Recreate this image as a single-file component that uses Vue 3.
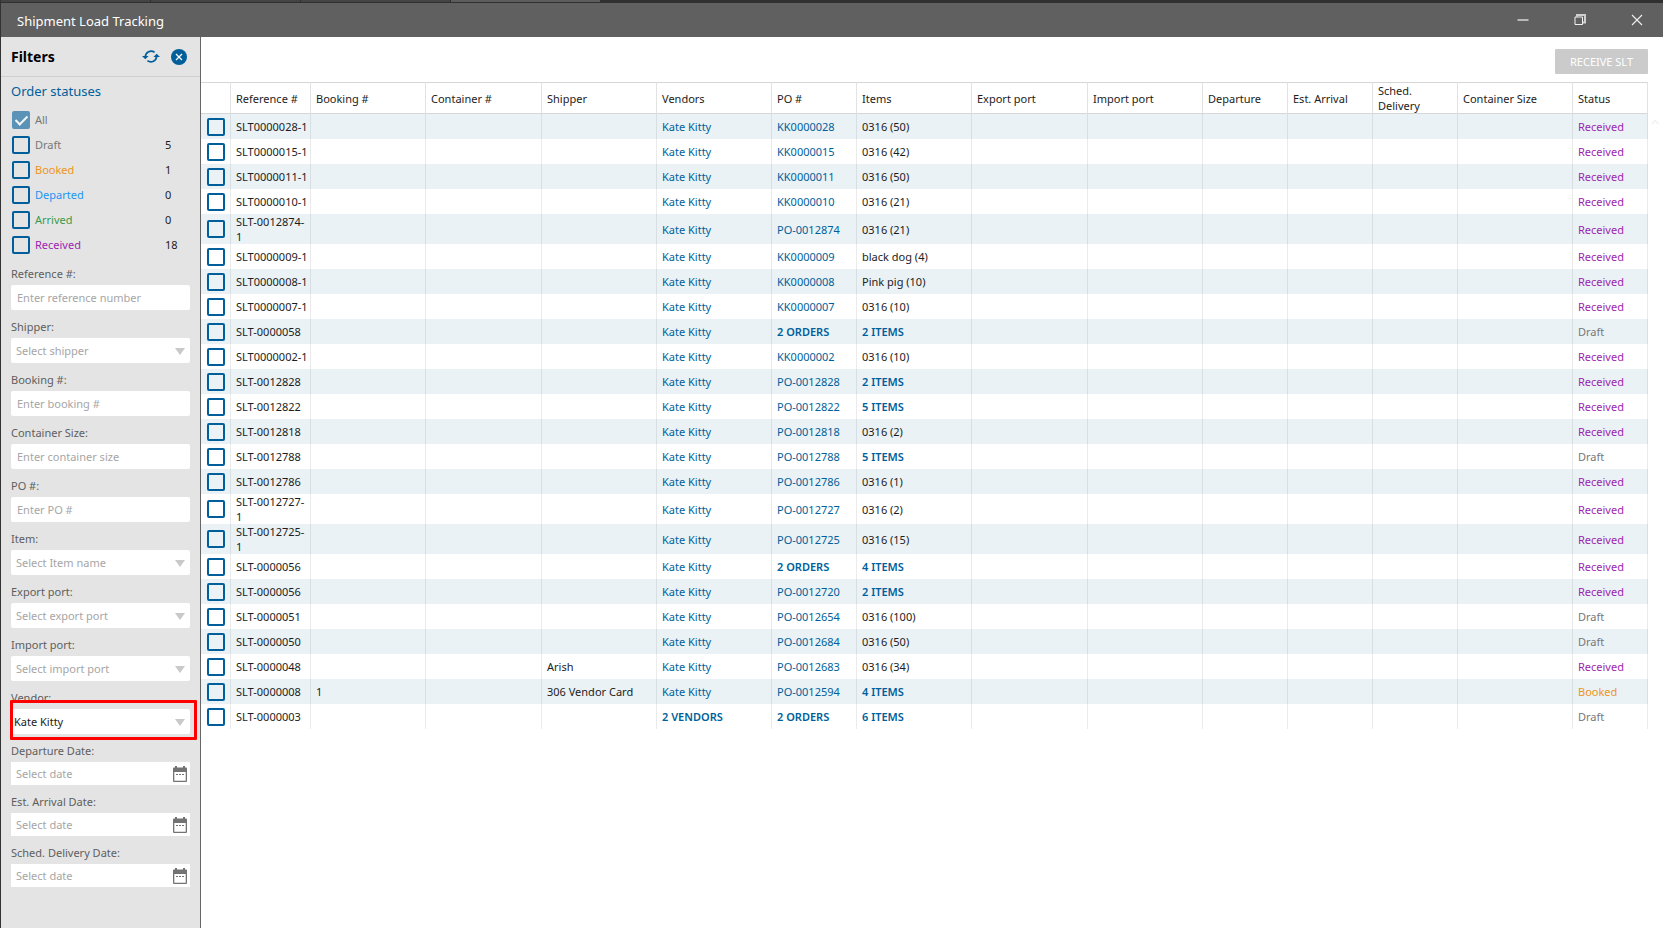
<script setup>
import { reactive, ref } from 'vue'

const statuses = reactive([
  { name: 'All', tone: 'all', count: '', checked: true, disabled: true },
  { name: 'Draft', tone: 'draft', count: 5, checked: false },
  { name: 'Booked', tone: 'booked', count: 1, checked: false },
  { name: 'Departed', tone: 'departed', count: 0, checked: false },
  { name: 'Arrived', tone: 'arrived', count: 0, checked: false },
  { name: 'Received', tone: 'received', count: 18, checked: false },
])

const fields = [
  { id: 'reference', label: 'Reference #:', type: 'text', hint: 'Enter reference number' },
  { id: 'shipper', label: 'Shipper:', type: 'select', hint: 'Select shipper' },
  { id: 'booking', label: 'Booking #:', type: 'text', hint: 'Enter booking #' },
  { id: 'size', label: 'Container Size:', type: 'text', hint: 'Enter container size' },
  { id: 'po', label: 'PO #:', type: 'text', hint: 'Enter PO #' },
  { id: 'item', label: 'Item:', type: 'select', hint: 'Select Item name' },
  { id: 'export', label: 'Export port:', type: 'select', hint: 'Select export port' },
  { id: 'import', label: 'Import port:', type: 'select', hint: 'Select import port' },
  { id: 'vendor', label: 'Vendor:', type: 'select', value: 'Kate Kitty', marked: true },
  { id: 'departure', label: 'Departure Date:', type: 'date', hint: 'Select date' },
  { id: 'arrival', label: 'Est. Arrival Date:', type: 'date', hint: 'Select date' },
  { id: 'delivery', label: 'Sched. Delivery Date:', type: 'date', hint: 'Select date' },
]

const columns = [
  ['Reference #', 'w80'], ['Booking #', 'w115'], ['Container #', 'w116'], ['Shipper', 'w115'],
  ['Vendors', 'w115'], ['PO #', 'w85'], ['Items', 'w115'], ['Export port', 'w116'],
  ['Import port', 'w115'], ['Departure', 'w85'], ['Est. Arrival', 'w85'], ['Sched. Delivery', 'w85'],
  ['Container Size', 'w115'], ['Status', 'w75'],
]

const rows = ref([
  ['SLT0000028-1', 'KK0000028', '0316 (50)', 'Received'],
  ['SLT0000015-1', 'KK0000015', '0316 (42)', 'Received'],
  ['SLT0000011-1', 'KK0000011', '0316 (50)', 'Received'],
  ['SLT0000010-1', 'KK0000010', '0316 (21)', 'Received'],
  ['SLT-0012874-\n1', 'PO-0012874', '0316 (21)', 'Received'],
  ['SLT0000009-1', 'KK0000009', 'black dog (4)', 'Received'],
  ['SLT0000008-1', 'KK0000008', 'Pink pig (10)', 'Received'],
  ['SLT0000007-1', 'KK0000007', '0316 (10)', 'Received'],
  ['SLT-0000058', '2 ORDERS', '2 ITEMS', 'Draft'],
  ['SLT0000002-1', 'KK0000002', '0316 (10)', 'Received'],
  ['SLT-0012828', 'PO-0012828', '2 ITEMS', 'Received'],
  ['SLT-0012822', 'PO-0012822', '5 ITEMS', 'Received'],
  ['SLT-0012818', 'PO-0012818', '0316 (2)', 'Received'],
  ['SLT-0012788', 'PO-0012788', '5 ITEMS', 'Draft'],
  ['SLT-0012786', 'PO-0012786', '0316 (1)', 'Received'],
  ['SLT-0012727-\n1', 'PO-0012727', '0316 (2)', 'Received'],
  ['SLT-0012725-\n1', 'PO-0012725', '0316 (15)', 'Received'],
  ['SLT-0000056', '2 ORDERS', '4 ITEMS', 'Received'],
  ['SLT-0000056', 'PO-0012720', '2 ITEMS', 'Received'],
  ['SLT-0000051', 'PO-0012654', '0316 (100)', 'Draft'],
  ['SLT-0000050', 'PO-0012684', '0316 (50)', 'Draft'],
  ['SLT-0000048', 'PO-0012683', '0316 (34)', 'Received', '', 'Arish'],
  ['SLT-0000008', 'PO-0012594', '4 ITEMS', 'Booked', '1', '306 Vendor Card'],
  ['SLT-0000003', '2 ORDERS', '6 ITEMS', 'Draft', '', '', '2 VENDORS'],
].map(([reference, po, items, status, booking = '', shipper = '', vendor = 'Kate Kitty']) => (
  { reference, po, items, status, booking, shipper, vendor, checked: false }
)))

const isGroup = (text) => /^\d+ [A-Z]+$/.test(text)
</script>

<template>
  <div class="window">
    <div class="strip"><i class="tab"></i><i class="tab"></i><i class="tab"></i><i class="tab active"></i></div>
    <header class="titlebar">
      <h1>Shipment Load Tracking</h1>
      <div class="controls">
        <button type="button" aria-label="Minimize">
          <svg width="12" height="12" viewBox="0 0 12 12"><path d="M0.5 6H11.5" stroke="#b9b9b9" stroke-width="2" /></svg>
        </button>
        <button type="button" aria-label="Restore">
          <svg width="12" height="12" viewBox="0 0 12 12" fill="none">
            <path d="M3 2.5V1H11V8.5H9" stroke="#cfcfcf" stroke-width="2" />
            <path d="M1 3H8.5V10.5H1Z" stroke="#f2f2f2" />
          </svg>
        </button>
        <button type="button" aria-label="Close">
          <svg width="12" height="12" viewBox="0 0 12 12"><path d="M1 1L11 11M11 1L1 11" stroke="#f0f0f0" stroke-width="1.1" /></svg>
        </button>
      </div>
    </header>
    <div class="body">
      <aside class="sidebar">
        <div class="sidehead">
          <h2>Filters</h2>
          <button type="button" aria-label="Refresh filters">
            <svg width="18" height="16" viewBox="0 0 18 16" fill="none">
              <path d="M3.4 8A5.7 5.7 0 0 1 12.6 3.4M14.6 7A5.7 5.7 0 0 1 5.4 11.6" stroke="#005f9a" stroke-width="1.7" />
              <path d="M0 7H6.6L3.3 10.2ZM11.4 8H18L14.7 4.8Z" fill="#005f9a" />
            </svg>
          </button>
          <button type="button" aria-label="Clear filters">
            <svg width="16" height="16" viewBox="0 0 16 16">
              <circle cx="8" cy="8" r="8" fill="#005f9a" />
              <path d="M5 5L11 11M11 5L5 11" stroke="#fff" stroke-width="1.3" />
            </svg>
          </button>
        </div>
        <h3>Order statuses</h3>
        <ul class="statuses">
          <li v-for="s in statuses" :key="s.name">
            <label :class="s.tone">
              <input v-model="s.checked" type="checkbox" class="check" :disabled="s.disabled" />{{ s.name }}
            </label>
            <span class="count">{{ s.count }}</span>
          </li>
        </ul>
        <div v-for="f in fields" :key="f.id" class="field">
          <label :for="f.id">{{ f.label }}</label>
          <div class="control" :class="{ marked: f.marked }">
            <template v-if="f.type === 'select'">
              <select :id="f.id" :class="{ chosen: f.value }"><option>{{ f.value || f.hint }}</option></select>
              <svg class="arrow" width="10" height="7" viewBox="0 0 10 7"><path d="M0 0H10L5 7Z" fill="#c9c9c9" /></svg>
            </template>
            <input v-else :id="f.id" type="text" :class="f.type" :placeholder="f.hint" />
            <button v-if="f.type === 'date'" type="button" class="calendar" :aria-label="'Pick ' + f.label">
              <svg width="14" height="16" viewBox="0 0 14 16">
                <path fill="#737373" fill-rule="evenodd" d="M2 0H4V1.5H10V0H12V1.5H13Q14 1.5 14 2.5V15Q14 16 13 16H1Q0 16 0 15V2.5Q0 1.5 1 1.5H2ZM1.3 6V14.7H12.7V6Z" />
                <path d="M3 8.5H5M6 8.5H8M9 8.5H11" stroke="#737373" stroke-width="1.2" />
              </svg>
            </button>
          </div>
        </div>
      </aside>
      <main class="content">
        <div class="toolbar"><button type="button" class="receive" disabled>RECEIVE SLT</button></div>
        <div class="tablewrap">
          <table>
            <colgroup><col class="w30" /><col v-for="c in columns" :key="c[0]" :class="c[1]" /></colgroup>
            <thead>
              <tr><th></th><th v-for="c in columns" :key="c[0]" scope="col">{{ c[0] }}</th></tr>
            </thead>
            <tbody>
              <tr v-for="(r, i) in rows" :key="i">
                <td class="pick"><input v-model="r.checked" type="checkbox" class="check" :aria-label="'Select ' + r.reference" /></td>
                <td class="ref">{{ r.reference }}</td>
                <td>{{ r.booking }}</td>
                <td></td>
                <td>{{ r.shipper }}</td>
                <td><a href="#" :class="{ group: isGroup(r.vendor) }">{{ r.vendor }}</a></td>
                <td><a href="#" :class="{ group: isGroup(r.po) }">{{ r.po }}</a></td>
                <td><a v-if="isGroup(r.items)" href="#" class="group">{{ r.items }}</a><template v-else>{{ r.items }}</template></td>
                <td></td><td></td><td></td><td></td><td></td><td></td>
                <td :class="r.status.toLowerCase()">{{ r.status }}</td>
              </tr>
            </tbody>
          </table>
          <svg class="scrollup" width="8" height="6" viewBox="0 0 8 6" fill="none"><path d="M0.5 5L4 1.5L7.5 5" stroke="#f1f1f1" stroke-width="1.5" /></svg>
        </div>
      </main>
    </div>
  </div>
</template>

<style>
body { background: #fff; }
</style>

<style scoped>
* { box-sizing: border-box; }
.window {
  display: flex; flex-direction: column; min-height: 100vh;
  border-left: 1px solid #333; background: #fff; color: #1c1c1c;
  font: 11px/15px "Noto Sans", "Open Sans", sans-serif;
}
h1, h2, h3, ul { margin: 0; padding: 0; font-weight: 400; list-style: none; }
button { border: 0; padding: 0; background: none; font: inherit; display: flex; align-items: center; justify-content: center; }
.strip { display: flex; gap: 1px; height: 3px; background: #303030; }
.tab { width: 149px; height: 2px; background: #444; }
.tab.active { background: #5c5c5c; }
.titlebar { display: flex; justify-content: space-between; align-items: center; height: 34px; padding-left: 16px; background: #606060; color: #fff; }
h1 { padding-top: 2px; font-size: 13px; line-height: 20px; }
.controls { display: flex; align-self: stretch; margin-right: -2px; overflow: hidden; }
.controls button { width: 57px; }
.window { overflow-x: clip; }
.body { display: flex; flex: 1; }
.sidebar { flex: none; width: 200px; padding: 0 10px; background: #e4e4e4; border-right: 1px solid #666; }
.sidehead { display: flex; align-items: center; gap: 11px; height: 40px; margin: 0 -10px; padding: 0 13px 0 10px; border-bottom: 1px solid #cfcfcf; }
h2 { flex: 1; font-size: 14px; line-height: 20px; font-weight: 700; color: #000; }
h3 { padding-bottom: 2px; font-size: 13px; line-height: 28px; color: #005f9a; }
.statuses li { display: flex; align-items: center; height: 25px; }
.statuses label { display: flex; align-items: center; gap: 5px; width: 154px; padding-left: 1px; }
.check { appearance: none; display: block; flex: none; width: 18px; height: 18px; margin: 0; border: 2px solid #005f9a; border-radius: 2px; }
.check:checked { background: #005f9a; }
.check:checked::after { content: ""; display: block; width: 5px; height: 10px; margin: 0 auto; border: solid #fff; border-width: 0 2px 2px 0; transform: rotate(45deg); }
.check:disabled { opacity: .6; }
.all, .draft { color: #777; }
.booked { color: #ee9420; }
.departed { color: #2196f3; }
.arrived { color: #3c9a4b; }
.received { color: #9c1fb0; }
.field label { display: block; padding: 9px 0 3px; font-size: 11px; line-height: 16px; color: #5e5e5e; }
.control { position: relative; }
.field input, select { appearance: none; display: block; width: 100%; height: 25px; margin: 0; padding: 0 6px; border: 0; border-radius: 2px; outline: 0; background: #fff; color: #a6a6a6; font: inherit; }
.field input.date { height: 23px; padding: 0 5px; border-radius: 0; }
.field input::placeholder { color: #a6a6a6; }
select { padding: 0 5px; }
select.chosen { padding: 0 3px; color: #1c1c1c; }
.arrow { position: absolute; right: 5px; top: 10px; }
.calendar { position: absolute; right: 3px; top: 4px; }
.marked::after { content: ""; position: absolute; inset: -9px -7px -6px -1px; border: 3px solid #f00; border-radius: 1px; pointer-events: none; }
.content { flex: 1; min-width: 0; padding-right: 15px; }
.toolbar { display: flex; justify-content: flex-end; height: 45px; padding-top: 12px; }
.receive { width: 93px; height: 25px; border-radius: 1px; background: #cbcbcb; color: #fff; }
.tablewrap { position: relative; }
.scrollup { position: absolute; right: -11px; top: 37px; }
table { width: 100%; table-layout: fixed; border-spacing: 0; }
.w30 { width: 30px; } .w75 { width: 75px; } .w80 { width: 80px; } .w85 { width: 85px; }
.w115 { width: 115px; } .w116 { width: 116px; }
th { height: 32px; padding: 0 5px; border: solid #d6d6d6; border-width: 1px 0; border-right: 1px solid #e2e2e2; font-weight: 400; text-align: left; }
td { height: 25px; padding: 0 5px; border-right: 1px solid rgba(0, 0, 0, .08); }
tbody tr:nth-child(odd) { background: #eaf2f6; }
td.pick { padding: 0 5px 0 6px; }
td.ref { padding-right: 0; white-space: pre; }
a { color: #005f9a; text-decoration: none; }
.group { font-weight: 600; }
</style>
